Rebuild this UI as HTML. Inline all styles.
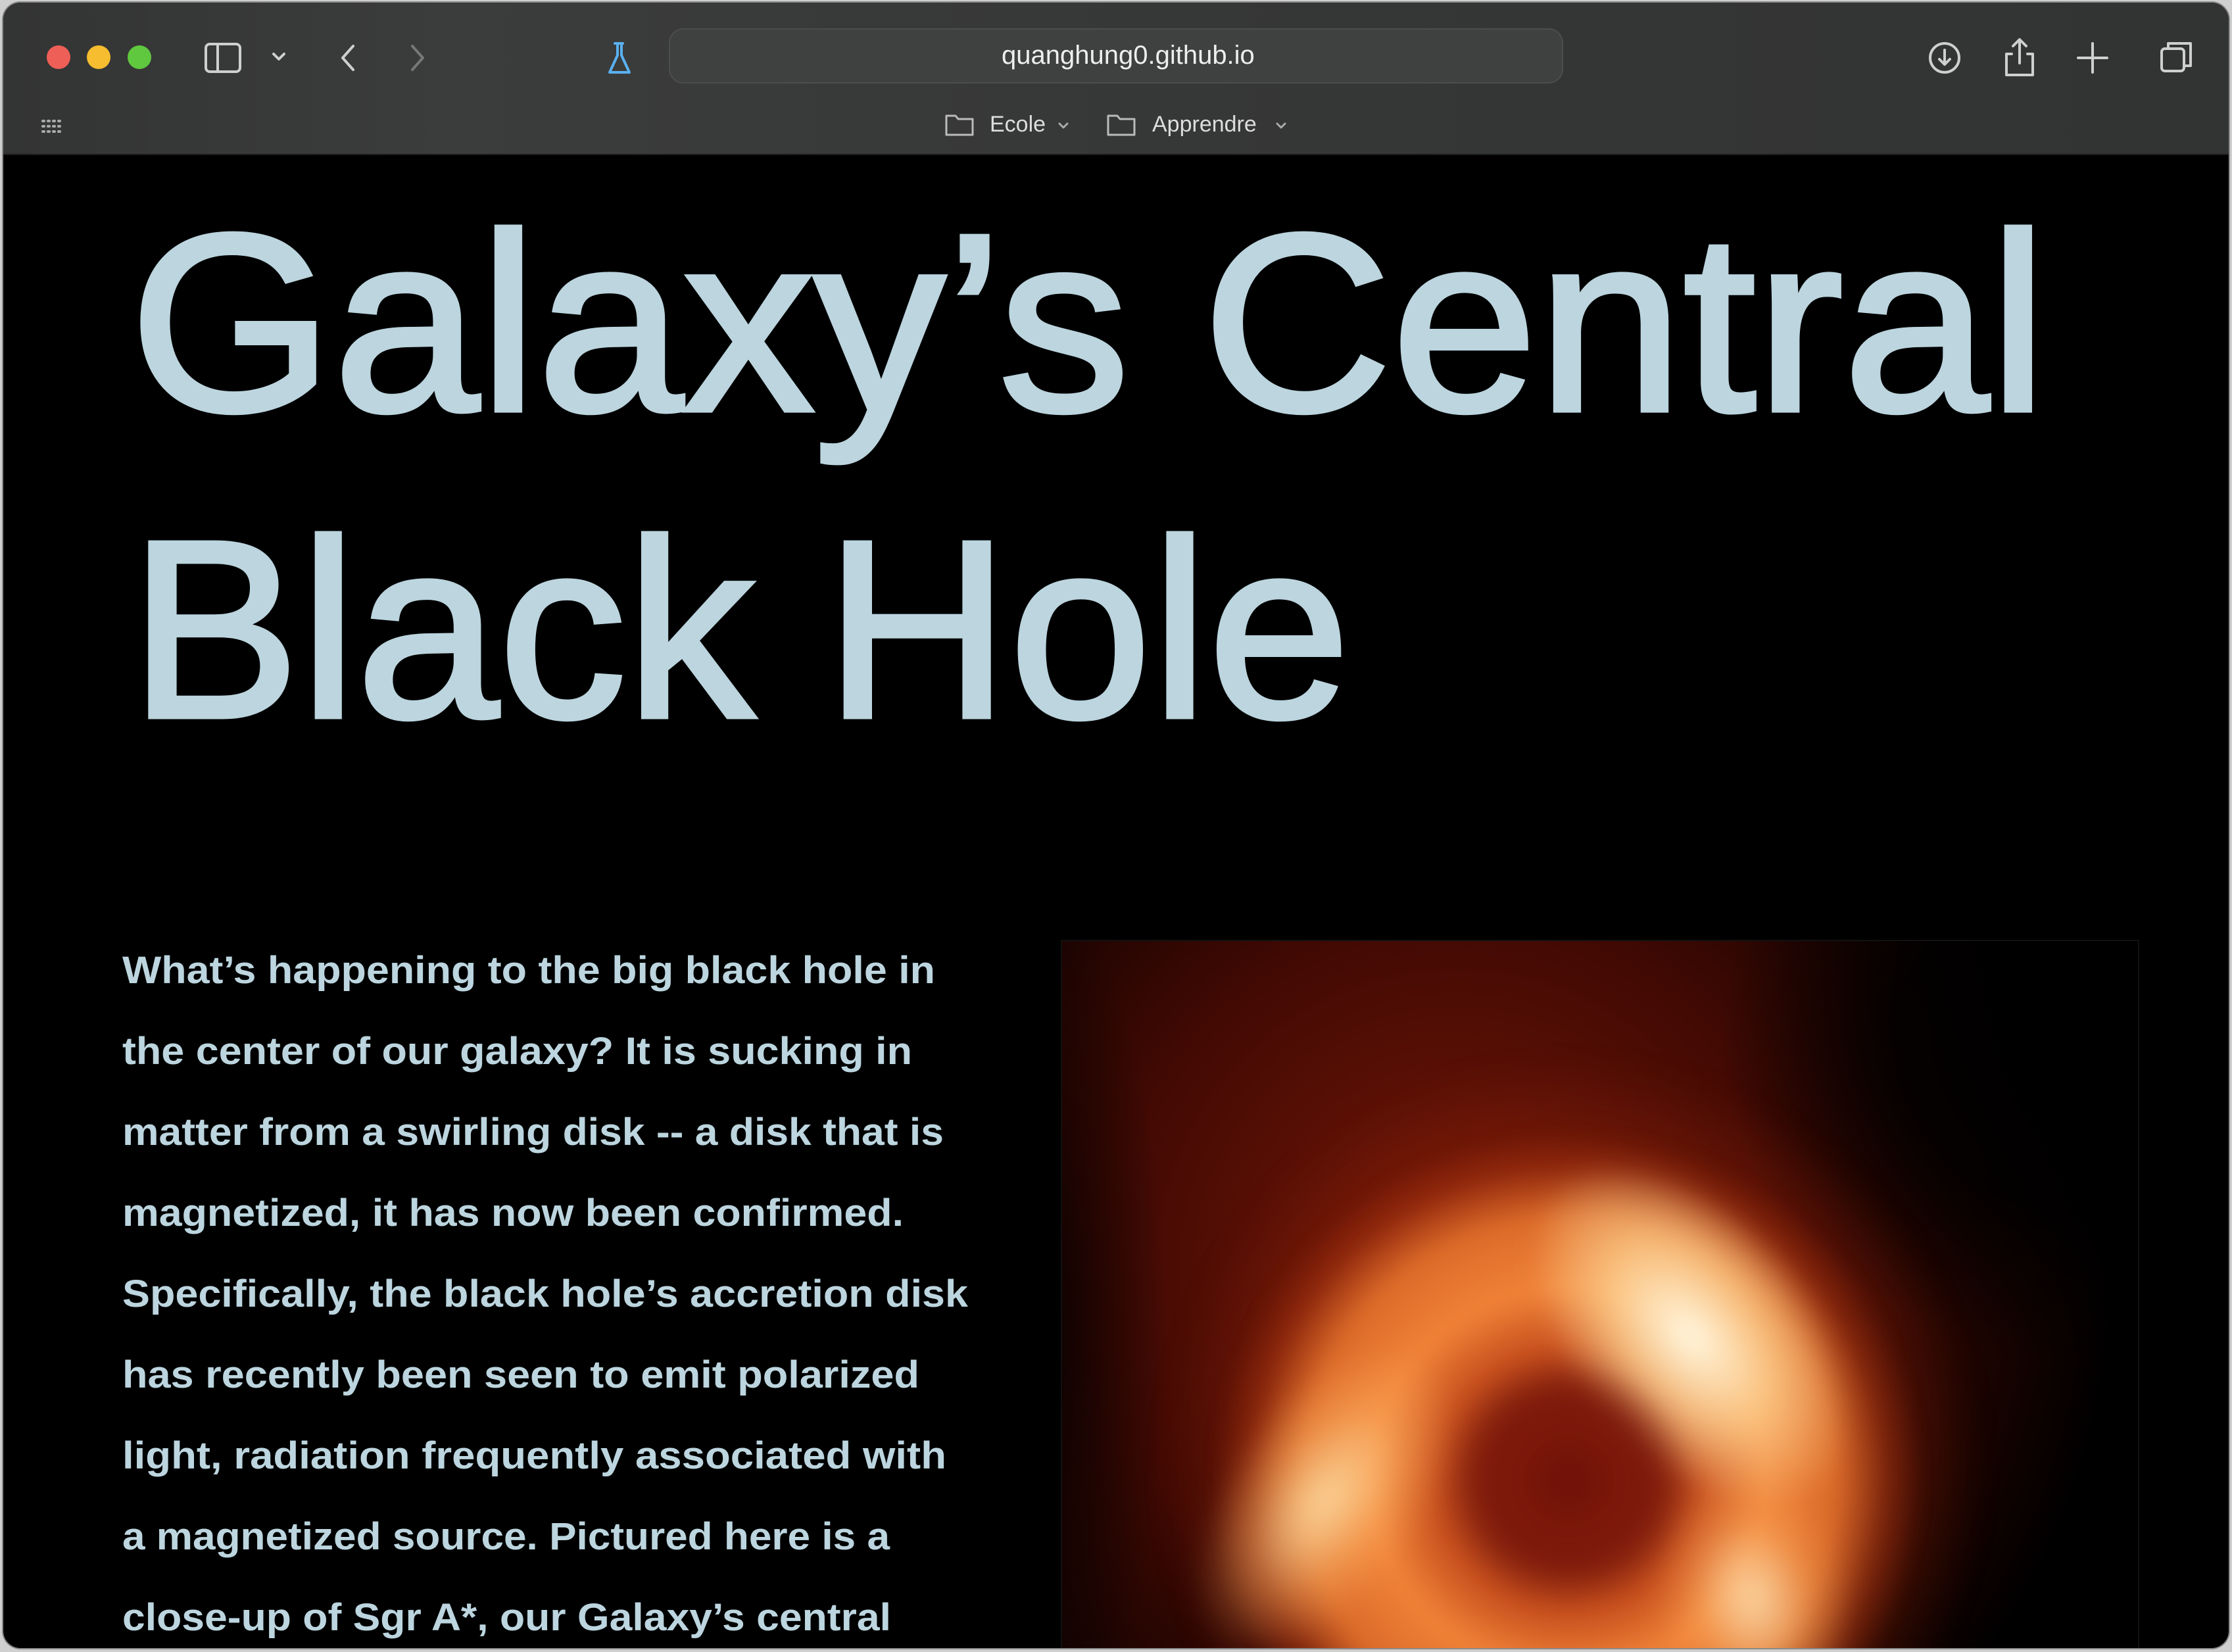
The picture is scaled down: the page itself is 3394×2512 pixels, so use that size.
<!DOCTYPE html>
<html><head><meta charset="utf-8"><style>
html,body{margin:0;padding:0;width:3394px;height:2512px;overflow:hidden;background:#cfcfcf}
.win{position:absolute;left:5px;top:4px;width:3384px;height:2502px;border-radius:26px;overflow:hidden;background:#000;box-shadow:0 0 0 2px #8a8a8a}
.tb{position:absolute;left:0;top:0;width:100%;height:230px;background:linear-gradient(90deg,#333434,#3b3c3c 20%,#353636 60%,#323333);border-bottom:2px solid #1a1a1a}
.ab{position:absolute}
.dot{position:absolute;top:65px;width:36px;height:36px;border-radius:50%}
.url{position:absolute;left:1012px;top:39px;width:1360px;height:84px;border-radius:22px;background:#3f4040;border:2px solid #4c4d4d;box-sizing:border-box}
.t{position:absolute;font-family:"Liberation Sans",sans-serif;color:#e6e6e6;white-space:nowrap}
.img{position:absolute;left:1608px;top:1425px;width:1636px;height:1077px;overflow:hidden;background:#000;border:2px solid #111;border-bottom:none}
.img div{position:absolute;border-radius:50%}
</style></head><body>
<div class="win">
<div class="tb">
 <div class="dot" style="left:66px;background:#ee5f57"></div>
 <div class="dot" style="left:127px;background:#f5bd2f"></div>
 <div class="dot" style="left:189px;background:#5fc83f"></div>
 <svg class="ab" style="left:0;top:0" width="3384" height="230" fill="none" stroke="#cfcfcf" stroke-width="4" stroke-linecap="round" stroke-linejoin="round">
  <rect x="308" y="63" width="52" height="42" rx="6"/><line x1="326" y1="63" x2="326" y2="105"/>
  <path d="M411 78 l8 8 l8 -8"/>
  <path d="M532 66 l-16 18 l16 18"/>
  <path d="M622 66 l16 18 l-16 18" stroke="#777"/>
  <path d="M934 62 v18 l-12 26 h30 l-12 -26 v-18 M930 62h12" stroke="#5ab0f0"/>
  <path d="M1481 82 v-8 a10 10 0 0 1 20 0 v8" stroke="#eee"/><rect x="1476" y="82" width="30" height="22" rx="3" fill="#eee" stroke="#eee"/>
  <rect x="2178" y="66" width="30" height="24" rx="4"/><rect x="2194" y="78" width="24" height="22" rx="4" fill="#cfcfcf"/>
  <rect x="2252" y="66" width="44" height="34" rx="5"/><line x1="2252" y1="76" x2="2296" y2="76"/>
  <path d="M2346 72 a16 16 0 1 0 4 12 M2346 66 v8 h-8"/>
  <circle cx="2952" cy="84" r="22"/><path d="M2952 72 v22 M2944 86 l8 8 l8 -8"/>
  <path d="M3054 78 h-8 v32 h40 v-32 h-8 M3066 92 v-34 M3056 66 l10 -10 l10 10"/>
  <path d="M3177 62 v44 M3155 84 h44"/>
  <rect x="3282" y="70" width="34" height="34" rx="5"/><path d="M3292 70 v-8 h34 v34 h-10"/>
  <g stroke="#aaa" stroke-width="4"><path d="M60 180h2M68 180h2M76 180h2M84 180h2M60 188h2M68 188h2M76 188h2M84 188h2M60 196h2M68 196h2M76 196h2M84 196h2"/></g>
  <path d="M1434 172 h14 l4 5 h22 v24 h-40z" stroke="#bbb" stroke-width="3"/>
  <path d="M1606 184 l6 6 l6 -6" stroke="#aaa" stroke-width="3"/>
  <path d="M1680 172 h14 l4 5 h22 v24 h-40z" stroke="#bbb" stroke-width="3"/>
  <path d="M1937 184 l6 6 l6 -6" stroke="#aaa" stroke-width="3"/>
 </svg>
 <div class="url"></div>
 <div class="t" style="left:1518px;top:58px;font-size:40px;color:#eee">quanghung0.github.io</div>
 <div class="t" style="left:1500px;top:166px;font-size:34px;color:#ddd">Ecole</div>
 <div class="t" style="left:1747px;top:166px;font-size:34px;color:#ddd">Apprendre</div>
</div>
<div class="img">
 <div style="left:-400px;top:-500px;width:2000px;height:2000px;background:radial-gradient(closest-side,rgba(125,25,8,0.95),rgba(85,12,4,0.75) 55%,rgba(0,0,0,0) 100%)"></div>
 <div style="left:1000px;top:-350px;width:1200px;height:1000px;background:radial-gradient(closest-side,rgba(0,0,0,1),rgba(0,0,0,0.85) 55%,rgba(0,0,0,0))"></div>
 <div style="left:150px;top:180px;width:1250px;height:1250px;background:radial-gradient(closest-side,rgba(170,50,15,0.9),rgba(140,35,10,0.6) 65%,rgba(0,0,0,0));filter:blur(20px)"></div>
 <div style="left:230px;top:290px;width:1080px;height:1060px;background:radial-gradient(closest-side,rgba(110,18,8,1) 20%,rgba(200,80,30,1) 38%,rgba(240,130,55,1) 55%,rgba(230,115,45,0.9) 75%,rgba(180,60,20,0.4) 90%,rgba(0,0,0,0) 100%);filter:blur(12px)"></div>
 <div style="left:770px;top:290px;width:370px;height:620px;background:radial-gradient(closest-side,rgba(255,248,225,1),rgba(255,215,150,0.75) 50%,rgba(0,0,0,0));transform:rotate(-40deg);filter:blur(16px)"></div>
 <div style="left:250px;top:580px;width:300px;height:540px;background:radial-gradient(closest-side,rgba(255,228,170,0.85),rgba(255,180,100,0.4) 60%,rgba(0,0,0,0));transform:rotate(35deg);filter:blur(18px)"></div>
 <div style="left:900px;top:800px;width:300px;height:400px;background:radial-gradient(closest-side,rgba(255,235,190,0.8),rgba(255,180,100,0.3) 60%,rgba(0,0,0,0));transform:rotate(-10deg);filter:blur(18px)"></div>
 <div style="left:590px;top:640px;width:360px;height:360px;background:radial-gradient(closest-side,rgba(110,16,8,1),rgba(130,28,12,0.85) 55%,rgba(0,0,0,0));filter:blur(18px)"></div>
 <div style="left:-260px;top:-100px;width:420px;height:1400px;background:radial-gradient(closest-side,rgba(0,0,0,0.9),rgba(0,0,0,0))"></div>
</div>
<svg class="ab" style="left:0;top:0" width="3384" height="2502" font-family="Liberation Sans, sans-serif">
 <g fill="#bcd5df" stroke="#bcd5df" stroke-width="7" font-size="385">
  <text x="192" y="620" textLength="2916" lengthAdjust="spacingAndGlyphs">Galaxy’s Central</text>
  <text x="192" y="1086" textLength="1856" lengthAdjust="spacingAndGlyphs">Black Hole</text>
 </g>
 <g fill="#bcd5df" font-size="58" font-weight="bold">
  <text x="181" y="1491" textLength="1236" lengthAdjust="spacingAndGlyphs">What’s happening to the big black hole in</text>
  <text x="181" y="1614" textLength="1201" lengthAdjust="spacingAndGlyphs">the center of our galaxy? It is sucking in</text>
  <text x="181" y="1737" textLength="1249" lengthAdjust="spacingAndGlyphs">matter from a swirling disk -- a disk that is</text>
  <text x="181" y="1860" textLength="1188" lengthAdjust="spacingAndGlyphs">magnetized, it has now been confirmed.</text>
  <text x="181" y="1983" textLength="1286" lengthAdjust="spacingAndGlyphs">Specifically, the black hole’s accretion disk</text>
  <text x="181" y="2106" textLength="1212" lengthAdjust="spacingAndGlyphs">has recently been seen to emit polarized</text>
  <text x="181" y="2229" textLength="1253" lengthAdjust="spacingAndGlyphs">light, radiation frequently associated with</text>
  <text x="181" y="2352" textLength="1167" lengthAdjust="spacingAndGlyphs">a magnetized source. Pictured here is a</text>
  <text x="181" y="2475" textLength="1169" lengthAdjust="spacingAndGlyphs">close-up of Sgr A*, our Galaxy’s central</text>
 </g>
</svg>
</div>
</body></html>
